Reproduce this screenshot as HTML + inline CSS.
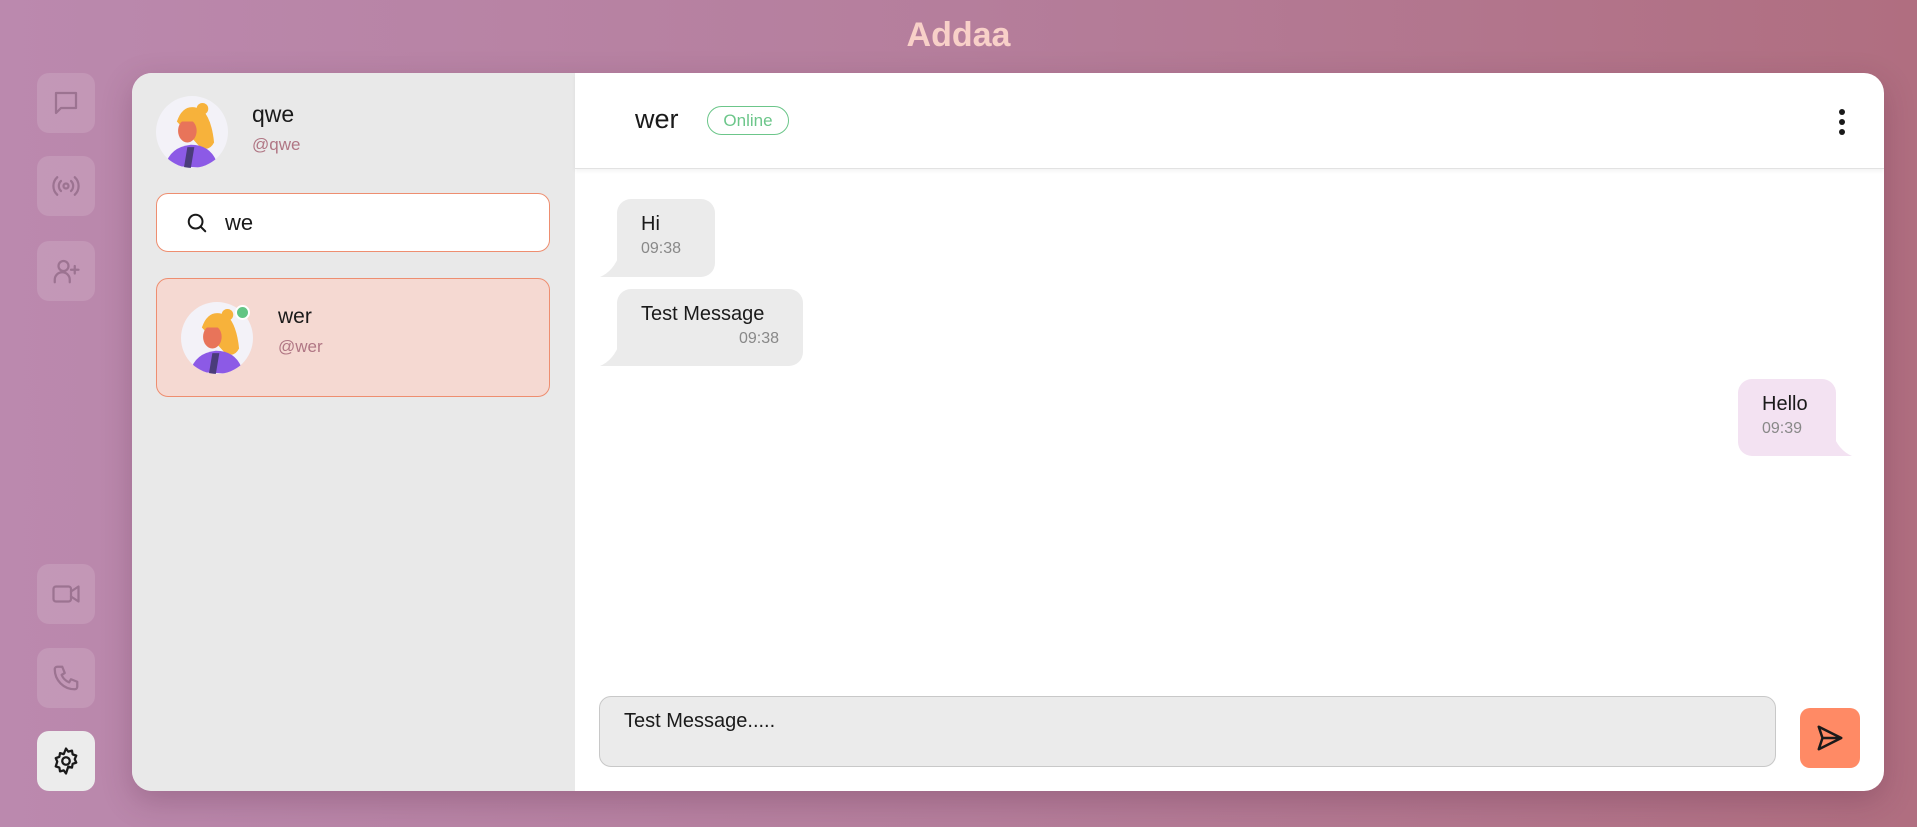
<!DOCTYPE html>
<html><head><style>
*{margin:0;padding:0;box-sizing:border-box}
body{width:1917px;height:827px;overflow:hidden;font-family:"Liberation Sans",sans-serif;background:linear-gradient(90deg,#bb89ae 0%,#b57e9c 50%,#b06e80 100%);position:relative}
.title{position:absolute;left:0;width:1917px;top:16px;text-align:center;font-size:34px;font-weight:bold;color:#f8d0c8}
.nb{position:absolute;left:37px;width:58px;height:60px;border-radius:12px;background:rgba(255,255,255,0.13);display:flex;align-items:center;justify-content:center}
.nb svg{width:30px;height:30px;fill:none;stroke:#9c7391;stroke-width:1.8;stroke-linecap:round;stroke-linejoin:round}
.card{position:absolute;left:132px;top:73px;width:1752px;height:718px;border-radius:20px;overflow:hidden;background:#fff;box-shadow:0 10px 30px rgba(80,30,60,0.25)}
.left{position:absolute;left:0;top:0;width:443px;height:718px;background:#e9e9e9}
.av{position:absolute;width:72px;height:72px;border-radius:50%;background:#f3f2f8;overflow:hidden}
.msg{position:absolute;background:#ebebeb;border-radius:14px;padding:14px 24px 0 24px}
.msg .t{font-size:20px;color:#1a1a1a}
.msg .tm{font-size:16px;color:#888;margin-top:4px}
</style></head><body>
<div class="title">Addaa</div>
<div class="nb" style="top:73px"><svg viewBox="0 0 24 24"><path d="M4 4h16v12H8l-4 4z"/></svg></div>
<div class="nb" style="top:156px"><svg viewBox="0 0 24 24"><circle cx="12" cy="12" r="2"/><path d="M8 8a5.5 5.5 0 0 0 0 8M16 8a5.5 5.5 0 0 1 0 8M5 5a9.5 9.5 0 0 0 0 14M19 5a9.5 9.5 0 0 1 0 14"/></svg></div>
<div class="nb" style="top:241px"><svg viewBox="0 0 24 24"><circle cx="10" cy="8" r="4"/><path d="M3 21v-2a6 6 0 0 1 12 0v2M19 8v6M16 11h6"/></svg></div>
<div class="nb" style="top:564px"><svg viewBox="0 0 24 24"><rect x="2" y="6" width="14" height="12" rx="2"/><path d="M16 10l6-4v12l-6-4"/></svg></div>
<div class="nb" style="top:648px"><svg viewBox="0 0 24 24"><path d="M5 3h4l2 5-2.5 1.5a11 11 0 0 0 6 6L16 13l5 2v4a2 2 0 0 1-2 2A16 16 0 0 1 3 5a2 2 0 0 1 2-2"/></svg></div>
<div class="nb" style="top:731px;background:#ececec"><svg viewBox="0 0 24 24" style="stroke:#1a1a1a"><circle cx="12" cy="12" r="3"/><path d="M12 2l1.8 2.5 3-.8.5 3 2.9 1-1.2 2.8 1.2 2.8-2.9 1-.5 3-3-.8L12 22l-1.8-2.5-3 .8-.5-3-2.9-1L5 12.5 3.8 9.7l2.9-1 .5-3 3 .8z"/></svg></div>

<div class="card">
 <div class="left">
  <div class="av" style="left:24px;top:23px"><svg width="72" height="72" viewBox="0 0 62 62"><path d="M18 22q6-18 22-10 8 8 10 28-4 8-12 4z" fill="#f7b23b"/><circle cx="40" cy="11" r="5" fill="#f7b23b"/><ellipse cx="27" cy="30" rx="8" ry="10" fill="#e8745a"/><path d="M18 22q6-10 18-6l-4 6z" fill="#f7b23b"/><path d="M8 60q4-16 22-18 16 0 22 14l-6 6z" fill="#8c5ae6"/><path d="M27 44h6l-3 18h-6z" fill="#4a3c7a"/></svg></div>
  <div style="position:absolute;left:120px;top:28px;font-size:23px;color:#1a1a1a">qwe</div>
  <div style="position:absolute;left:120px;top:62px;font-size:17px;color:#b07684">@qwe</div>
  <div style="position:absolute;left:24px;top:120px;width:394px;height:59px;background:#fff;border:1px solid #ee8e70;border-radius:12px">
   <svg style="position:absolute;left:29px;top:18px" width="22" height="22" viewBox="0 0 24 24" fill="none" stroke="#1a1a1a" stroke-width="2.2" stroke-linecap="round"><circle cx="10.5" cy="10.5" r="7.5"/><path d="M16 16l5 5"/></svg>
   <div style="position:absolute;left:68px;top:16px;font-size:22px;color:#1a1a1a">we</div>
  </div>
  <div style="position:absolute;left:24px;top:205px;width:394px;height:119px;background:#f5d9d2;border:1px solid #ee8e70;border-radius:12px">
   <div class="av" style="left:24px;top:23px"><svg width="72" height="72" viewBox="0 0 62 62"><path d="M18 22q6-18 22-10 8 8 10 28-4 8-12 4z" fill="#f7b23b"/><circle cx="40" cy="11" r="5" fill="#f7b23b"/><ellipse cx="27" cy="30" rx="8" ry="10" fill="#e8745a"/><path d="M18 22q6-10 18-6l-4 6z" fill="#f7b23b"/><path d="M8 60q4-16 22-18 16 0 22 14l-6 6z" fill="#8c5ae6"/><path d="M27 44h6l-3 18h-6z" fill="#4a3c7a"/></svg></div>
   <div style="position:absolute;left:78px;top:26px;width:15px;height:15px;border-radius:50%;background:#62c584;border:2px solid #fff"></div>
   <div style="position:absolute;left:121px;top:26px;font-size:21px;color:#1a1a1a">wer</div>
   <div style="position:absolute;left:121px;top:58px;font-size:17px;color:#b07684">@wer</div>
  </div>
 </div>
 <div style="position:absolute;left:443px;top:0;width:1309px;height:96px;border-bottom:1px solid #e2e2e2;box-shadow:0 2px 4px rgba(0,0,0,0.05)"></div>
 <div style="position:absolute;left:503px;top:31px;font-size:27px;color:#1a1a1a">wer</div>
 <div style="position:absolute;left:575px;top:33px;width:82px;height:29px;border:1px solid #6cc68a;border-radius:15px;color:#6cc68a;font-size:17px;text-align:center;line-height:27px">Online</div>
 <div style="position:absolute;left:1707px;top:36px;width:6px;height:6px;border-radius:50%;background:#1a1a1a;box-shadow:0 10px 0 #1a1a1a,0 20px 0 #1a1a1a"></div>

 <svg style="position:absolute;left:468px;top:180px" width="20" height="24"><path d="M20 0v24H0q14-6 20-24z" fill="#ebebeb"/></svg>
 <div class="msg" style="left:485px;top:126px;width:98px;height:78px;border-bottom-left-radius:0"><div class="t">Hi</div><div class="tm">09:38</div></div>
 <svg style="position:absolute;left:468px;top:269px" width="20" height="24"><path d="M20 0v24H0q14-6 20-24z" fill="#ebebeb"/></svg>
 <div class="msg" style="left:485px;top:216px;width:186px;height:77px;border-bottom-left-radius:0"><div class="t">Test Message</div><div class="tm" style="text-align:right">09:38</div></div>
 <svg style="position:absolute;left:1700px;top:359px" width="20" height="24"><path d="M0 0v24H20Q6 18 0 0z" fill="#f3e2f2"/></svg>
 <div class="msg" style="left:1606px;top:306px;width:98px;height:77px;background:#f3e2f2;border-bottom-right-radius:0"><div class="t">Hello</div><div class="tm">09:39</div></div>

 <div style="position:absolute;left:467px;top:623px;width:1177px;height:71px;background:#ebebeb;border:1px solid #c8c8c8;border-radius:12px;padding:13px 24px;font-size:20px;color:#1a1a1a">Test Message.....</div>
 <div style="position:absolute;left:1668px;top:635px;width:60px;height:60px;border-radius:10px;background:#ff8a65">
  <svg style="position:absolute;left:15px;top:15px" width="30" height="30" viewBox="0 0 24 24" fill="none" stroke="#1a1a1a" stroke-width="2" stroke-linejoin="round"><path d="M3 3l18 9-18 9 3-9zM6 12h15"/></svg>
 </div>
</div>
</body></html>
